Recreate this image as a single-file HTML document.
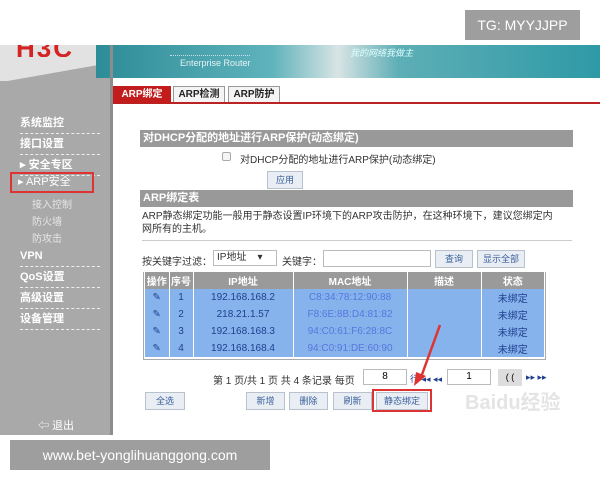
<!DOCTYPE html>
<html><head><meta charset="utf-8"><style>
*{margin:0;padding:0;box-sizing:border-box}
body{width:600px;height:480px;background:#fff;position:relative;overflow:hidden;font-family:"Liberation Sans","Noto Sans CJK SC",sans-serif;}
.a{position:absolute}
.side{left:0;top:45px;width:112px;height:390px;background:#a9a9a9}
.sidetop{left:0;top:45px;width:96px;height:36px;background:linear-gradient(170deg,#e2e2e2 70%,#a9a9a9 71%)}
.div{left:110px;top:45px;width:3px;height:390px;background:#8c8c8c}
.banner{left:96px;top:45px;width:504px;height:33px;background:linear-gradient(90deg,#2c8c97 0%,#5fb3bc 35%,#d8e4e4 48%,#5eaeb6 60%,#2e9aa6 100%)}
.mi{left:20px;font-size:11px;font-weight:bold;color:#fff;width:80px;border-bottom:1px dashed #eee;height:20px;line-height:18px}
.sub{left:32px;font-size:10px;color:#e6e6e6}
.gh{background:#999;color:#fff;font-size:11px;font-weight:bold;height:17px;line-height:17px;padding-left:3px}
.btn{background:#e9eef5;border:1px solid #b9c1cc;color:#3a5f9a;font-size:9px;text-align:center;line-height:16px;height:18px}
table{border-collapse:collapse;font-size:10px}
td{height:17px;text-align:center;color:#1f3f8f;border-right:1px solid #fff}
</style></head><body>
<div class="a" style="left:465px;top:10px;width:115px;height:30px;background:#9e9e9e;color:#fff;font-size:14px;line-height:30px;text-align:center">TG: MYYJJPP</div>
<div class="a side"></div>
<div class="a sidetop"></div>
<div class="a" style="left:0;top:45px;width:96px;height:12px;overflow:hidden"><div class="a" style="left:16px;top:-12px;font-size:26px;font-weight:bold;color:#d42323;letter-spacing:2px">H3C</div></div>
<div class="a banner"></div>
<div class="a" style="left:170px;top:55px;width:80px;border-top:1px dotted #cde"></div>
<div class="a" style="left:180px;top:58px;font-size:9px;color:#e6f2f4">Enterprise Router</div>
<div class="a" style="left:350px;top:46px;font-size:9px;color:#dff;font-style:italic">我的网络我做主</div>
<div class="a div"></div>
<div class="a mi" style="top:114px">系统监控</div>
<div class="a mi" style="top:135px">接口设置</div>
<div class="a mi" style="top:156px">▸ 安全专区</div>
<div class="a" style="left:10px;top:172px;width:84px;height:21px;border:2px solid #d33;color:#fff;font-size:11px;line-height:17px;padding-left:6px">▸ ARP安全</div>
<div class="a sub" style="top:196px">接入控制</div>
<div class="a sub" style="top:213px">防火墙</div>
<div class="a sub" style="top:230px">防攻击</div>
<div class="a mi" style="top:247px">VPN</div>
<div class="a mi" style="top:268px">QoS设置</div>
<div class="a mi" style="top:289px">高级设置</div>
<div class="a mi" style="top:310px">设备管理</div>
<div class="a" style="left:38px;top:417px;font-size:11px;color:#fff">⇦ 退出</div>
<div class="a" style="left:113px;top:102px;width:487px;height:2px;background:#b22"></div>
<div class="a" style="left:113px;top:86px;width:58px;height:17px;background:#c21c1c;color:#fff;font-size:10px;font-weight:bold;line-height:17px;text-align:center">ARP绑定</div>
<div class="a" style="left:173px;top:86px;width:52px;height:16px;border:1px solid #999;border-bottom:none;background:#f4f4f4;font-size:10px;font-weight:bold;line-height:15px;text-align:center;color:#222">ARP检测</div>
<div class="a" style="left:228px;top:86px;width:52px;height:16px;border:1px solid #999;border-bottom:none;background:#f4f4f4;font-size:10px;font-weight:bold;line-height:15px;text-align:center;color:#222">ARP防护</div>
<div class="a gh" style="left:140px;top:130px;width:433px">对DHCP分配的地址进行ARP保护(动态绑定)</div>
<div class="a" style="left:222px;top:152px;width:9px;height:9px;border:1px solid #aaa;border-radius:2px;background:#f5f5f5"></div>
<div class="a" style="left:240px;top:151px;font-size:10px;color:#333">对DHCP分配的地址进行ARP保护(动态绑定)</div>
<div class="a btn" style="left:267px;top:171px;width:36px">应用</div>
<div class="a gh" style="left:140px;top:190px;width:433px">ARP绑定表</div>
<div class="a" style="left:142px;top:210px;width:420px;font-size:10px;color:#333;line-height:13px">ARP静态绑定功能一般用于静态设置IP环境下的ARP攻击防护，在这种环境下，建议您绑定内网所有的主机。</div>
<div class="a" style="left:142px;top:240px;width:430px;height:1px;background:#ccc"></div>
<div class="a" style="left:142px;top:253px;font-size:10px;color:#333">按关键字过滤：</div>
<div class="a" style="left:213px;top:250px;width:64px;height:16px;border:1px solid #bbb;font-size:10px;line-height:14px;padding-left:3px;color:#333">IP地址 &nbsp;&nbsp;&nbsp;▾</div>
<div class="a" style="left:282px;top:253px;font-size:10px;color:#333">关键字：</div>
<div class="a" style="left:323px;top:250px;width:108px;height:17px;border:1px solid #bbb"></div>
<div class="a btn" style="left:435px;top:250px;width:38px">查询</div>
<div class="a btn" style="left:477px;top:250px;width:48px">显示全部</div>
<div class="a" style="left:143px;top:272px;width:403px;height:88px;border:1px solid #aaa;border-top:none;background:#fff"></div>
<table class="a" style="left:145px;top:272px;width:400px">
<tr style="background:#9a9a9a"><td style="width:24px;color:#fff;font-weight:bold">操作</td><td style="width:24px;color:#fff;font-weight:bold">序号</td><td style="width:100px;color:#fff;font-weight:bold">IP地址</td><td style="width:114px;color:#fff;font-weight:bold">MAC地址</td><td style="width:74px;color:#fff;font-weight:bold">描述</td><td style="color:#fff;font-weight:bold">状态</td></tr>
<tr style="background:#86b3ec"><td>✎</td><td>1</td><td>192.168.168.2</td><td style="color:#5577dd">C8:34:78:12:90:88</td><td></td><td>未绑定</td></tr>
<tr style="background:#86b3ec"><td>✎</td><td>2</td><td>218.21.1.57</td><td style="color:#5577dd">F8:6E:8B:D4:81:82</td><td></td><td>未绑定</td></tr>
<tr style="background:#86b3ec"><td>✎</td><td>3</td><td>192.168.168.3</td><td style="color:#5577dd">94:C0:61:F6:28:8C</td><td></td><td>未绑定</td></tr>
<tr style="background:#86b3ec"><td>✎</td><td>4</td><td>192.168.168.4</td><td style="color:#5577dd">94:C0:91:DE:60:90</td><td></td><td>未绑定</td></tr>
</table>
<div class="a" style="left:213px;top:372px;font-size:10px;color:#333">第 1 页/共 1 页 共 4 条记录 每页</div>
<div class="a" style="left:363px;top:369px;width:44px;height:16px;border:1px solid #bbb;font-size:10px;text-align:center;line-height:14px">8</div>
<div class="a" style="left:410px;top:372px;font-size:9px;color:#1f3f8f">行 ◂◂ ◂◂</div>
<div class="a" style="left:447px;top:369px;width:44px;height:16px;border:1px solid #bbb;font-size:10px;text-align:center;line-height:14px">1</div>
<div class="a" style="left:498px;top:369px;width:24px;height:17px;background:#ddd;font-size:9px;text-align:center;line-height:16px">( (</div>
<div class="a" style="left:526px;top:372px;font-size:9px;color:#1f3f8f">▸▸ ▸▸</div>
<div class="a btn" style="left:145px;top:392px;width:40px">全选</div>
<div class="a btn" style="left:246px;top:392px;width:39px">新增</div>
<div class="a btn" style="left:289px;top:392px;width:39px">删除</div>
<div class="a btn" style="left:333px;top:392px;width:39px">刷新</div>
<div class="a" style="left:372px;top:389px;width:60px;height:23px;border:2px solid #d33"></div>
<div class="a btn" style="left:376px;top:392px;width:52px">静态绑定</div>
<svg class="a" style="left:410px;top:320px" width="40" height="70"><line x1="30" y1="5" x2="10" y2="60" stroke="#d33" stroke-width="2.5"/><polygon points="4,66 6,52 16,56" fill="#d33"/></svg>
<div class="a" style="left:465px;top:386px;font-size:20px;font-weight:bold;color:#e4e4e4">Baidu经验</div>
<div class="a" style="left:10px;top:440px;width:260px;height:30px;background:#9e9e9e;color:#fff;font-size:14px;line-height:30px;text-align:center">www.bet-yonglihuanggong.com</div>
</body></html>
